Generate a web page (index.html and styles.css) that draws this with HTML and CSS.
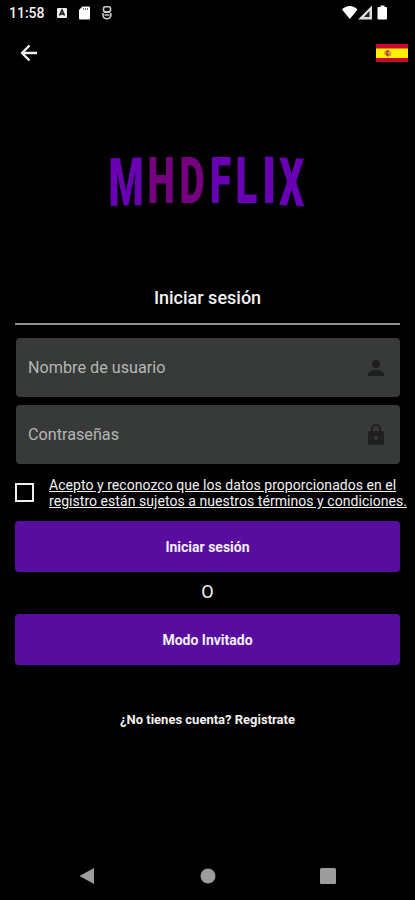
FILE: index.html
```html
<!DOCTYPE html>
<html lang="es">
<head>
<meta charset="utf-8">
<title>MHDFLIX</title>
<link rel="stylesheet" href="styles.css">
</head>
<body>
<div class="status">
  <span class="clock">11:58</span>
  <svg class="status-left" width="60" height="16" viewBox="0 0 60 16">
    <rect x="0" y="3" width="10" height="10" rx="1" fill="#eee"/>
    <path d="M2.500 10.500 5 5l2.500 5.500M3.500 9h3" fill="none" stroke="#111" stroke-width="1.400"/>
    <path d="M25.500 1.500h6.500a1 1 0 0 1 1 1v11a1 1 0 0 1-1 1h-9a1 1 0 0 1-1-1V5z" fill="#fff"/>
    <path d="M26.500 3v2M28.500 3v2M30.500 3v2" stroke="#777"/>
    <rect x="46.500" y="1.800" width="7" height="5" rx="1.800" fill="none" stroke="#ccc" stroke-width="1.600"/>
    <path d="M46 8v2.500a3.900 3.200 0 0 0 7.800 0V8M47 7.300h6M47.500 10h5" fill="none" stroke="#ccc" stroke-width="1.600"/>
  </svg>
  <svg class="status-right" width="46" height="16" viewBox="0 0 46 16">
    <path d="M0 4.500C4-.2 11.500-.2 15.500 4.500L7.800 14z" fill="#fff"/>
    <path d="M30 .5v14H16z" fill="#ddd"/>
    <path d="M27.500 6v6H22z" fill="#222"/>
    <path d="M36.500 2h2V.5h4V2h1.500q1 0 1 1v10.500q0 1-1 1h-7.500q-1 0-1-1V3q0-1 1-1z" fill="#fff"/>
  </svg>
</div>
<header class="bar">
  <svg width="18" height="18" viewBox="0 0 18 18"><path d="M17 9H2M9.500 1.500 2 9l7.500 7.500" fill="none" stroke="#f4f4f4" stroke-width="2.300"/></svg>
  <svg class="flag" width="32" height="18" viewBox="0 0 32 18">
    <path d="M0 0h32v18H0z" fill="#c60b2e"/><path d="M0 4.500h32v9.500H0z" fill="#fff200"/>
    <path d="M8.500 7.500h3M9 7v4M14.500 8v3.500" stroke="#c98a4a" stroke-width="1.200"/><rect x="9.800" y="6" width="4" height="6.500" rx="1.800" fill="#c34a25"/><path d="M12 8h2.200v2.200H12z" fill="#c8a08a"/>
  </svg>
</header>
<svg class="logo" width="215" height="110" viewBox="100 125 215 110">
  <g class="violet">
    <text transform="matrix(.6 -.015 0 1 108.500 206)">M</text>
    <text transform="matrix(.58 0 0 .98 210 202.500)">F</text>
    <text transform="matrix(.6 0 0 .98 235.500 202.500)">L</text>
    <text transform="matrix(.7 .02 0 .98 262 203)">I</text>
    <text transform="matrix(.59 .03 0 1 279 205)">X</text>
  </g>
  <g class="plum">
    <text transform="matrix(.58 0 0 .98 147.500 203)">H</text>
    <text transform="matrix(.58 0 0 .98 179.500 202.500)">D</text>
  </g>
</svg>
<main class="form">
  <h1>Iniciar sesión</h1>
  <div class="field">
    <span>Nombre de usuario</span>
    <svg width="24" height="24" viewBox="0 0 24 24"><path d="M12 12a4 4 0 1 0 0-8 4 4 0 0 0 0 8zm0 2c-2.670 0-8 1.340-8 4v2h16v-2c0-2.660-5.330-4-8-4z"/></svg>
  </div>
  <div class="field">
    <span>Contraseñas</span>
    <svg width="24" height="24" viewBox="0 0 24 24"><path d="M18 8h-1V6A5 5 0 0 0 7 6v2H6a2 2 0 0 0-2 2v10c0 1.100.9 2 2 2h12a2 2 0 0 0 2-2V10a2 2 0 0 0-2-2zm-6 9a2 2 0 1 1 0-4 2 2 0 0 1 0 4zm3.100-9H8.900V6a3.100 3.100 0 0 1 6.200 0z"/></svg>
  </div>
  <div class="terms">
    <span class="box"></span>
    <a>Acepto y reconozco que los datos proporcionados en el<br>registro están sujetos a nuestros términos y condiciones.</a>
  </div>
  <button class="login">Iniciar sesión</button>
  <div class="or">O</div>
  <button class="guest">Modo Invitado</button>
</main>
<p class="signup">¿No tienes cuenta? Registrate</p>
<nav class="nav">
  <svg width="16" height="18" viewBox="0 0 16 18"><path d="M15 1v16L.5 9z"/></svg>
  <svg width="16" height="16" viewBox="0 0 16 16"><circle cx="8" cy="8" r="7.500"/></svg>
  <svg width="16" height="16" viewBox="0 0 16 16"><rect width="16" height="16" rx="1.500"/></svg>
</nav>
</body>
</html>
```
FILE: styles.css
```css
* { box-sizing: border-box; }
body {
  margin: 0;
  height: 900px;
  background: #000;
  color: #f2f2f2;
  font-family: Roboto, sans-serif;
  display: flex;
  flex-direction: column;
  overflow: hidden;
}
.status {
  height: 26px;
  padding: 5px 27px 0 9px;
  display: flex;
  align-items: flex-start;
}
.clock { width: 48px; font-size: 14px; line-height: 16px; font-weight: 500; }
.status-right { margin-left: auto; }
.bar {
  height: 54px;
  padding: 0 7px 0 20px;
  display: flex;
  align-items: center;
  justify-content: space-between;
}
.logo { margin: 45px 0 0 100px; flex: none; }
.logo text { font-family: Roboto, sans-serif; font-weight: 900; font-size: 67px; }
.violet { fill: #6a00b4; }
.plum { fill: #740080; }
.form { padding: 0 15px; height: 450px; flex: none; }
h1 {
  margin: 0 0 13px;
  height: 90px;
  padding-top: 52px;
  border-bottom: 2px solid #8e8e8e;
  font-size: 18px;
  line-height: 22px;
  font-weight: 500;
  text-align: center;
}
.field {
  height: 59px;
  margin: 0 0 8px 1px;
  padding: 0 12px;
  border-radius: 4px;
  background: #383a39;
  color: #b5b6b5;
  display: flex;
  align-items: center;
  justify-content: space-between;
  font-size: 16.2px;
}
.field span { padding-bottom: 1px; }
.field svg { fill: #1e201f; }
.terms {
  display: flex;
  height: 49px;
  align-items: flex-start;
}
.box { width: 19px; height: 19px; margin: 11px 15px 0 0; border: 2.500px solid #eee; flex: none; }
.terms a {
  padding-top: 5px;
  font-size: 14px;
  line-height: 16px;
  letter-spacing: .05px;
  text-decoration: underline;
  white-space: nowrap;
}
button {
  display: block;
  width: 100%;
  height: 51px;
  border: 0;
  border-radius: 4px;
  background: #570e9e;
  color: #f4eff9;
  font: 700 14px Roboto, sans-serif;
}
.or { height: 42px; line-height: 39px; text-align: center; font-size: 18px; }
.signup { margin: 26px 0 0; line-height: 18px; font-size: 13px; font-weight: 700; text-align: center; }
.nav {
  margin-top: auto;
  height: 48px;
  padding: 0 79px;
  display: flex;
  align-items: center;
  justify-content: space-between;
  fill: #9d9d9d;
}
```
